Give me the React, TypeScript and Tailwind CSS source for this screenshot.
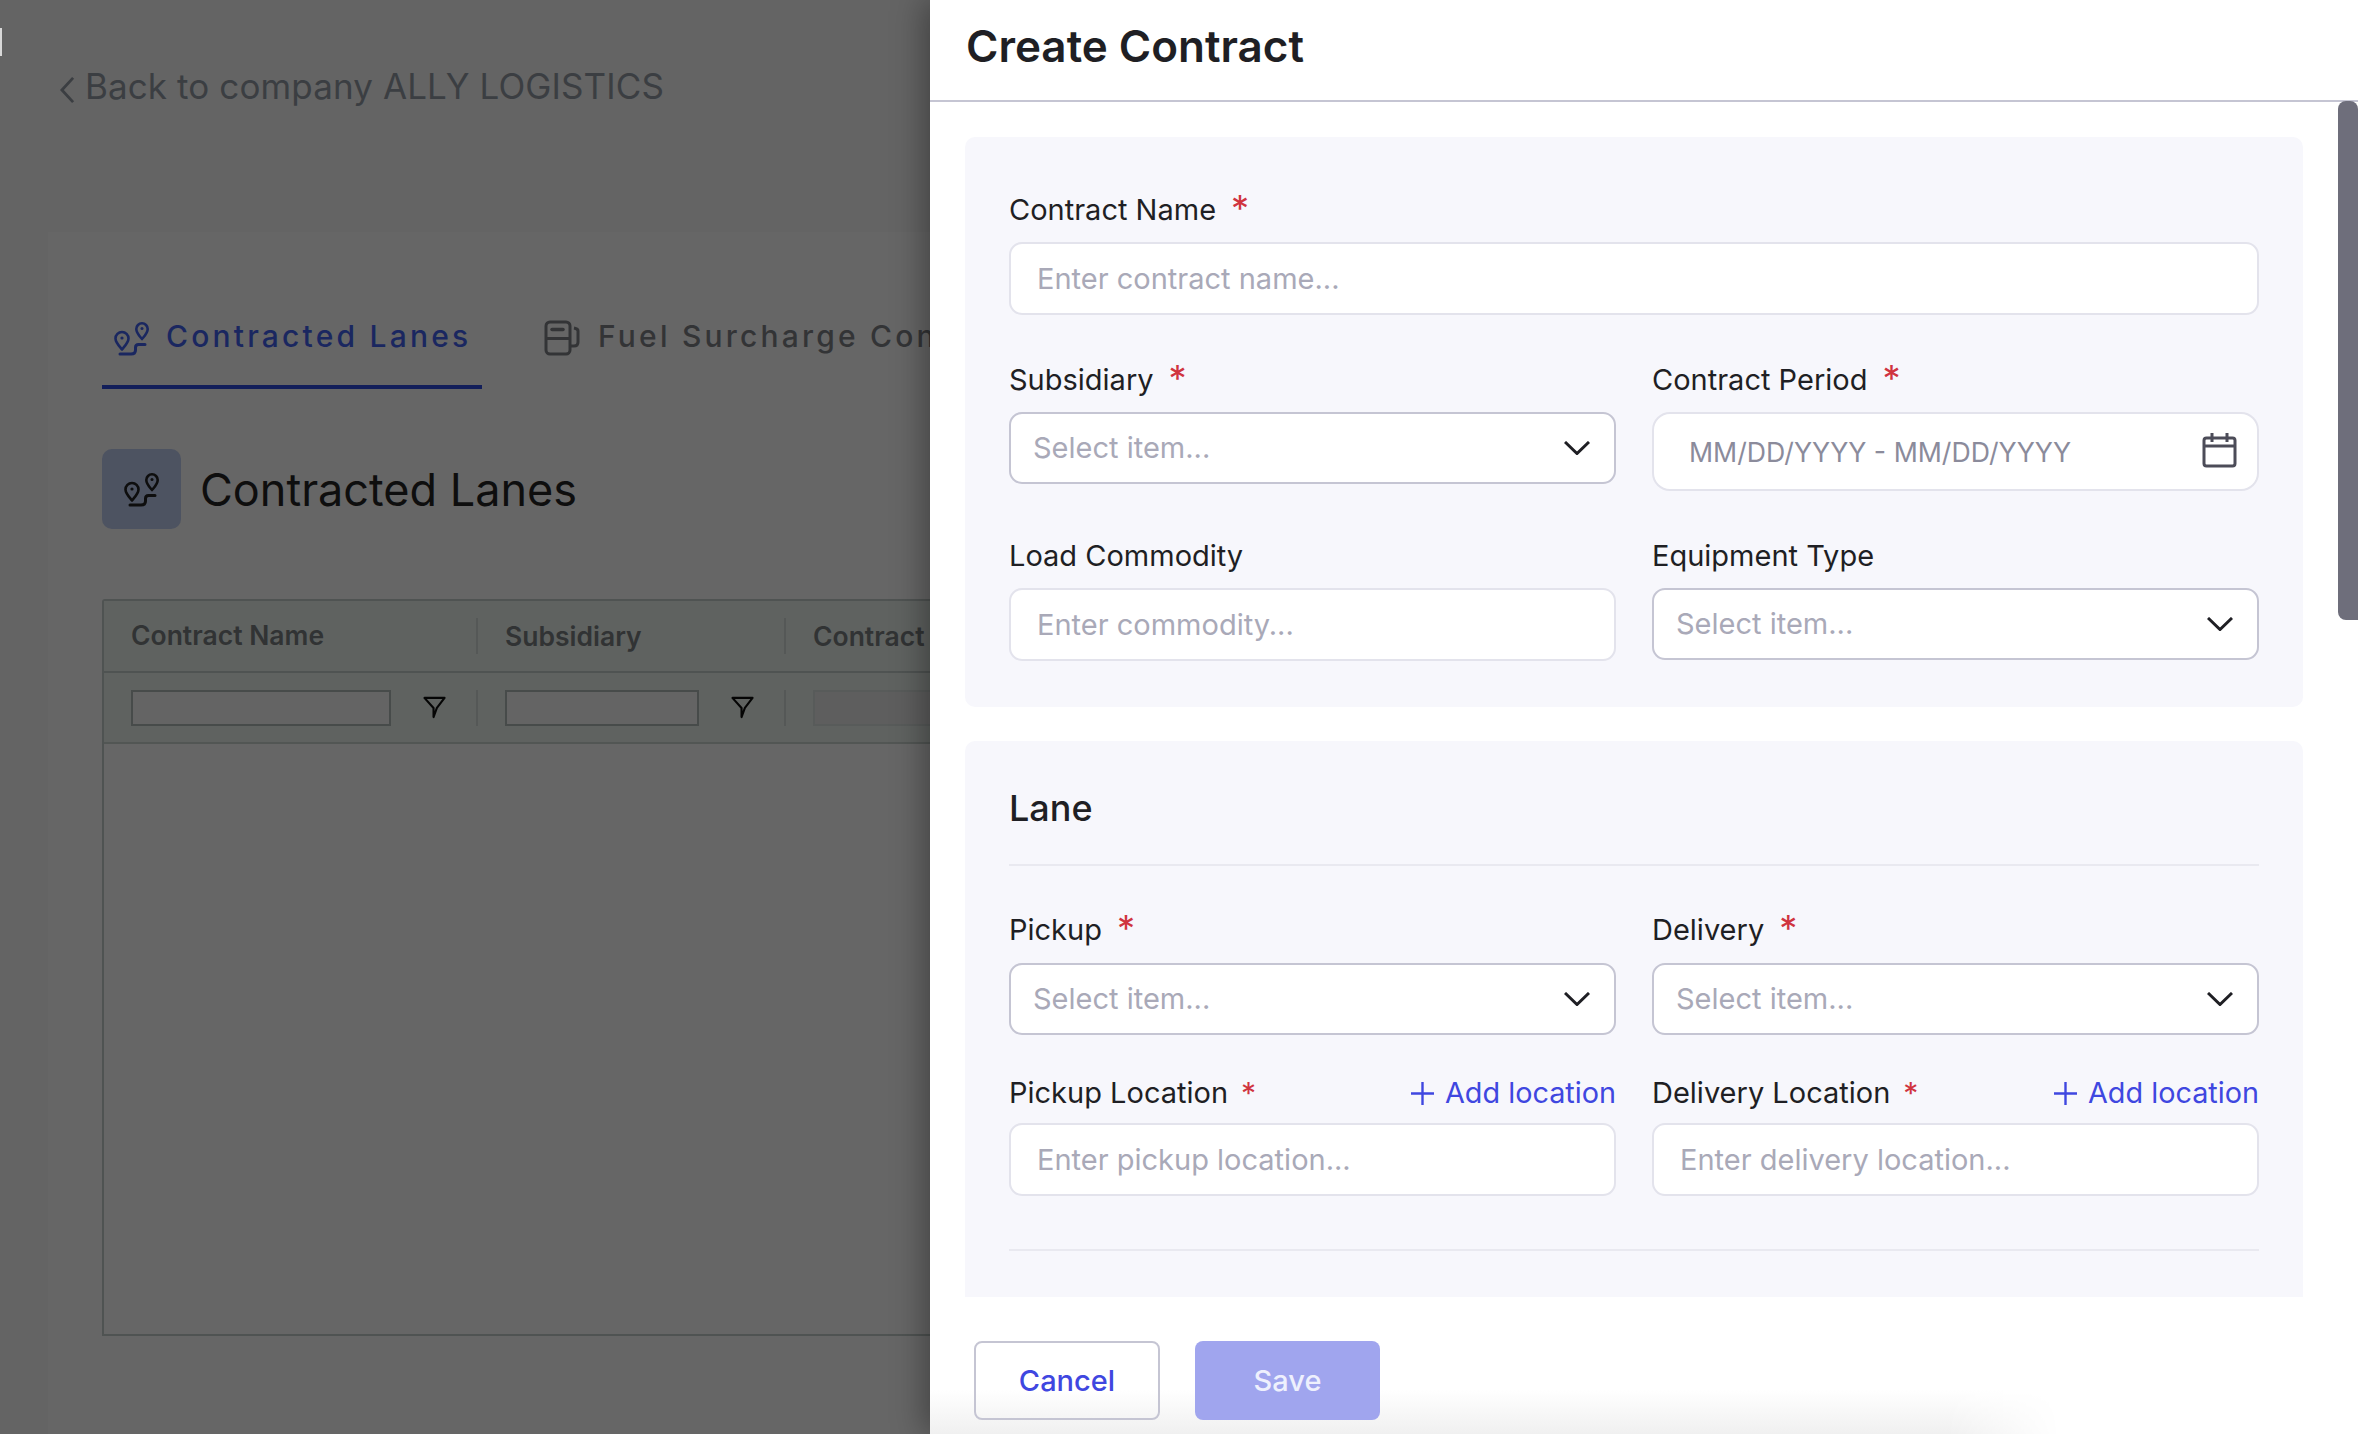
import { ReactNode } from 'react';

function LanesIcon({ className }: { className?: string }) {
  return (
    <svg viewBox="0 0 36 36" fill="none" stroke="currentColor" strokeWidth="2.6" className={className}>
      <path d="M9 29.5c-3-3.6-6.5-7-6.5-11a6.5 6.5 0 0 1 13 0c0 4-3.5 7.4-6.5 11z" strokeLinejoin="round" />
      <circle cx="9" cy="18" r="1.6" fill="currentColor" stroke="none" />
      <path d="M29 19c-2.600-3-5.700-6-5.700-10a5.700 5.700 0 0 1 11.400 0c0 4-3.100 7-5.700 10z" strokeLinejoin="round" />
      <circle cx="29" cy="8.500" r="1.500" fill="currentColor" stroke="none" />
      <path d="M7 34h11c2.800 0 4.500-1.500 4.500-4v-2.500c0-2 1.200-3 3-3H32" strokeLinecap="round" strokeWidth="3" />
    </svg>
  );
}

function FuelIcon({ className }: { className?: string }) {
  return (
    <svg viewBox="0 0 36 36" fill="none" stroke="currentColor" strokeWidth="3" className={className}>
      <rect x="2" y="2" width="24" height="32" rx="4" />
      <path d="M2 18.500h24" />
      <path d="M8 9.500h11" strokeLinecap="round" strokeWidth="3.500" />
      <path d="M26 26h4c2.500 0 4-1.500 4-4V11c0-1.500-1.200-2.500-4-3" />
    </svg>
  );
}

function FilterIcon() {
  return (
    <svg viewBox="0 0 24 24" fill="none" stroke="#050505" strokeWidth="2.200" strokeLinejoin="round" className="w-[23px] h-[23px]">
      <path d="M1.500 2h21L14.500 12.500 11 22v-9.500z" />
    </svg>
  );
}

function Chevron() {
  return (
    <svg viewBox="0 0 26 14" fill="none" stroke="#1f1f24" strokeWidth="3" className="w-[26px] h-[14px] shrink-0">
      <path d="M1 1l12 11.500L25 1" />
    </svg>
  );
}

function CalendarIcon() {
  return (
    <svg viewBox="0 0 34 36" fill="none" stroke="#4c4c58" strokeWidth="3" className="w-[35px] h-[36px] mb-[3px] shrink-0">
      <rect x="1.500" y="6" width="31" height="28" rx="2.500" />
      <path d="M1.500 14h31" />
      <path d="M9.500 1v9M24.500 1v9" />
    </svg>
  );
}

function Label({ text, required, small }: { text: string; required?: boolean; small?: boolean }) {
  return (
    <div className="flex items-start h-[36px] text-[29px] leading-[38px] text-[#1f1f24]">
      <span>{text}</span>
      {required && !small && <span className="ml-[15px] text-[#d0343f] text-[36px] leading-[35px]">*</span>}
      {required && small && <span className="ml-[13px] text-[#d0343f] text-[30px] leading-[38px]">*</span>}
    </div>
  );
}

function TextInput({ placeholder }: { placeholder: string }) {
  return (
    <input
      placeholder={placeholder}
      className="block w-full h-[73px] px-[26px] bg-white border-2 border-[#e3e3ec] rounded-[13px] text-[29px] text-[#1f1f24] placeholder:text-[#a9a9b8] outline-none"
    />
  );
}

function Select() {
  return (
    <div className="flex items-center justify-between h-[72px] pl-[22px] pr-[24px] bg-white border-2 border-[#c5c5d3] rounded-[13px]">
      <span className="text-[29px] text-[#a9a9b8]">Select item...</span>
      <Chevron />
    </div>
  );
}

function AddLocation() {
  return (
    <div className="flex items-center gap-[11px] h-[36px] pt-[2px] text-[28.8px] leading-[36px] text-[#3f47e0]">
      <svg viewBox="0 0 24 24" fill="none" stroke="currentColor" strokeWidth="2.500" className="w-[23px] h-[23px]">
        <path d="M12 0v24M0 12h24" />
      </svg>
      <span>Add location</span>
    </div>
  );
}

function FieldRow({ children, className }: { children: ReactNode; className?: string }) {
  return <div className={`grid grid-cols-2 gap-x-[36px] ${className ?? ''}`}>{children}</div>;
}

function BackgroundPage() {
  return (
    <div className="w-[930px] h-full shrink-0 overflow-hidden bg-[#646464] relative">
      <div className="absolute left-0 top-[28px] w-[2px] h-[28px] bg-[#d8d8d8]" />
      <div className="flex items-center h-[232px] pl-[60px] pb-[60px] text-[#3b3e42]">
        <svg viewBox="0 0 16 30" fill="none" stroke="currentColor" strokeWidth="3" className="w-[15px] h-[28px] mt-[7px]">
          <path d="M14 2L2 15l12 13" />
        </svg>
        <span className="ml-[10px] text-[35px] tracking-[0.1px] whitespace-nowrap">Back to company ALLY LOGISTICS</span>
      </div>
      <div className="ml-[48px] h-full bg-[#666666] pl-[54px]">
        <div className="flex h-[157px] whitespace-nowrap">
          <div className="flex items-start w-[380px] shrink-0 h-[157px] pt-[88px] pl-[11px] border-b-[4px] border-[#131f5a] text-[#1a2760]">
            <LanesIcon className="w-[36px] h-[36px] shrink-0" />
            <span className="ml-[17px] text-[30px] leading-[32px] font-medium tracking-[3.2px]">Contracted Lanes</span>
          </div>
          <div className="flex items-start pt-[88px] pl-[62px] text-[#333436]">
            <FuelIcon className="w-[36px] h-[36px] shrink-0" />
            <span className="ml-[18px] text-[30px] leading-[32px] font-medium tracking-[3.2px]">Fuel Surcharge Contracts</span>
          </div>
        </div>
        <div className="flex items-center mt-[60px] h-[80px]">
          <div className="flex items-center justify-center w-[79px] h-[80px] rounded-[10px] bg-[#4d5361] text-[#0e0e0e]">
            <LanesIcon className="w-[36px] h-[36px] mr-[2px]" />
          </div>
          <span className="ml-[19px] mt-[2px] text-[45px] text-[#0e0e0e] whitespace-nowrap">Contracted Lanes</span>
        </div>
        <div className="mt-[70px] w-[1000px] h-[737px] border-2 border-[#4f5352] rounded-t-[3px]">
          <div className="flex items-center h-[72px] bg-[#5f6260] border-b-2 border-[#4f5352] text-[26.5px] font-semibold text-[#313334] whitespace-nowrap">
            <div className="w-[372px] pl-[27px]">Contract Name</div>
            <div className="w-[308px] pl-[27px] border-l-2 border-[#555857] h-[36px] leading-[36px]">Subsidiary</div>
            <div className="pl-[27px] border-l-2 border-[#555857] h-[36px] leading-[36px]">Contract Period</div>
          </div>
          <div className="flex items-center h-[71px] bg-[#5f6260] border-b-2 border-[#525654]">
            <div className="flex items-center w-[372px] pl-[27px]">
              <div className="w-[260px] h-[36px] border-2 border-[#474b4a] bg-[#646464]" />
              <div className="ml-[32px]"><FilterIcon /></div>
            </div>
            <div className="flex items-center w-[308px] pl-[27px] border-l-2 border-[#555857]">
              <div className="w-[194px] h-[36px] border-2 border-[#474b4a] bg-[#646464]" />
              <div className="ml-[32px]"><FilterIcon /></div>
            </div>
            <div className="pl-[27px] border-l-2 border-[#555857]">
              <div className="w-[260px] h-[36px] border-2 border-[#585b5a] bg-[#5e5e5e]" />
            </div>
          </div>
        </div>
      </div>
    </div>
  );
}

function Drawer() {
  return (
    <div className="relative flex flex-col w-[1428px] h-full bg-white shadow-[-6px_0_30px_rgba(0,0,0,0.35)]">
      <div className="flex items-center h-[102px] pl-[36px] pb-[8px] border-b-2 border-[#c5c5d3]">
        <h1 className="text-[44px] font-semibold text-[#1f1f24]">Create Contract</h1>
      </div>
      <div className="absolute right-0 top-[101px] w-[20px] h-[519px] rounded-l-[8px] rounded-tr-[8px] bg-[#6e6e7b]" />
      <div className="h-[1195px] overflow-hidden pt-[35px] pl-[35px] pr-[55px]">
        <div className="h-[570px] pt-[54px] px-[44px] bg-[#f7f7fc] rounded-[10px]">
          <Label text="Contract Name" required />
          <div className="mt-[15px]"><TextInput placeholder="Enter contract name..." /></div>
          <FieldRow className="mt-[46px]">
            <div>
              <Label text="Subsidiary" required />
              <div className="mt-[15px]"><Select /></div>
            </div>
            <div>
              <Label text="Contract Period" required />
              <div className="flex items-center justify-between mt-[15px] h-[79px] pl-[35px] pr-[20px] bg-white border-2 border-[#e3e3ec] rounded-[18px]">
                <span className="pt-[2px] text-[26.7px] text-[#8b8b9b]">MM/DD/YYYY - MM/DD/YYYY</span>
                <CalendarIcon />
              </div>
            </div>
          </FieldRow>
          <FieldRow className="mt-[46px]">
            <div>
              <Label text="Load Commodity" />
              <div className="mt-[15px]"><TextInput placeholder="Enter commodity..." /></div>
            </div>
            <div>
              <Label text="Equipment Type" />
              <div className="mt-[15px]"><Select /></div>
            </div>
          </FieldRow>
        </div>
        <div className="mt-[34px] pt-[42px] px-[44px] pb-[100px] bg-[#f7f7fc] rounded-t-[10px]">
          <div className="h-[50px] text-[36px] leading-[50px] font-medium text-[#1f1f24]">Lane</div>
          <div className="mt-[31px] h-[2px] bg-[#e9e9f0]" />
          <FieldRow className="mt-[45px]">
            <div>
              <Label text="Pickup" required />
              <div className="mt-[16px]"><Select /></div>
            </div>
            <div>
              <Label text="Delivery" required />
              <div className="mt-[16px]"><Select /></div>
            </div>
          </FieldRow>
          <FieldRow className="mt-[39px]">
            <div>
              <div className="flex justify-between">
                <Label text="Pickup Location" required small />
                <AddLocation />
              </div>
              <div className="mt-[13px]"><TextInput placeholder="Enter pickup location..." /></div>
            </div>
            <div>
              <div className="flex justify-between">
                <Label text="Delivery Location" required small />
                <AddLocation />
              </div>
              <div className="mt-[13px]"><TextInput placeholder="Enter delivery location..." /></div>
            </div>
          </FieldRow>
          <div className="mt-[53px] h-[2px] bg-[#e9e9f0]" />
        </div>
      </div>
      <div className="relative flex-1 flex items-start gap-[35px] pt-[44px] pl-[44px]">
        {/* soft fade along the bottom edge, stops short of the right side */}
        <div className="absolute left-0 bottom-0 w-[1130px] h-[44px] bg-gradient-to-t from-[#f0f0f0] to-white [mask-image:linear-gradient(to_right,black_90%,transparent)]" />
        <button className="relative w-[186px] h-[79px] bg-transparent border-2 border-[#c5c5d3] rounded-[8px] text-[29px] font-medium text-[#3f47e0]">Cancel</button>
        <button className="relative w-[185px] h-[79px] bg-[#a0a5ee] rounded-[8px] text-[29px] font-medium text-[#eef0fd]">Save</button>
      </div>
    </div>
  );
}

export default function App() {
  return (
    <div className="flex w-[2358px] h-[1434px] overflow-hidden [font-family:Inter,sans-serif]">
      <BackgroundPage />
      <Drawer />
    </div>
  );
}
